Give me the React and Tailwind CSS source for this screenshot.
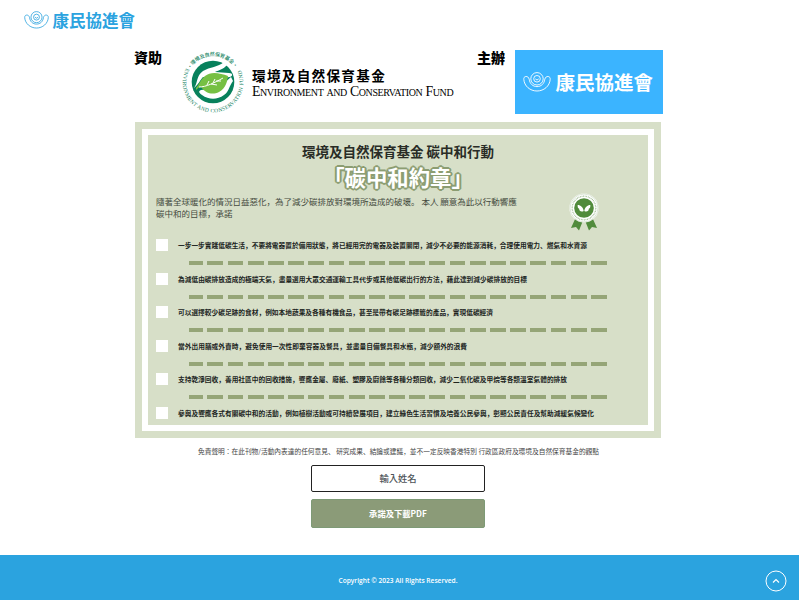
const pledges = [
  { text: '一步一步實踐低碳生活，不要將電器置於備用狀態，將已經用完的電器及裝置關閉，減少不必要的能源消耗，合理使用電力、燃氣和水資源', width: 'w-[409px]' },
  { text: '為減低由碳排放造成的極端天氣，盡量選用大眾交通運輸工具代步或其他低碳出行的方法，藉此達到減少碳排放的目標', width: 'w-[349px]' },
  { text: '可以選擇較少碳足跡的食材，例如本地蔬果及各種有機食品，甚至是帶有碳足跡標籤的產品，實現低碳經濟', width: 'w-[315px]' },
  { text: '當外出用膳或外賣時，避免使用一次性即棄容器及餐具，並盡量自備餐具和水瓶，減少額外的浪費', width: 'w-[289px]' },
  { text: '支持乾淨回收，善用社區中的回收措施，響應金屬、廢紙、塑膠及廚餘等各種分類回收，減少二氧化碳及甲烷等各類溫室氣體的排放', width: 'w-[389px]' },
  { text: '參與及響應各式有關碳中和的活動，例如植樹活動或可持續發展項目，建立綠色生活習慣及培養公民參與，彰顯公民責任及幫助減緩氣候變化', width: 'w-[416px]' },
];

const font = "font-['Noto_Sans_CJK_JP',sans-serif]";

function BrandMark({ className }) {
  return (
    <svg viewBox="0 0 28 20" className={className} fill="none" stroke="currentColor" strokeWidth="0.9">
      <circle cx="14" cy="6.800" r="3.300" />
      <path d="M12.300 6.900q1.700 2.200 3.400 0" />
      <circle cx="14" cy="6.800" r="6.200" />
      <path d="M6.200 7.200C5.600 5.200 4.400 4.300 2.800 4.500 1.300 4.700.7 5.800.8 7.400 1.300 14 7 19 14 19s12.700-5 13.200-11.600c.1-1.600-.5-2.700-2-2.900-1.600-.2-2.800.7-3.400 2.700C21.200 11.800 18.200 14.600 14 14.600S6.800 11.800 6.200 7.200z" />
    </svg>
  );
}

function FundLogo() {
  return (
    <svg viewBox="0 0 66 66" className="h-[66px] w-[66px] shrink-0">
      <defs>
        <path id="fund-top" d="M10.200 20.500A26 26 0 0 1 55.800 20.500" />
        <path id="fund-bottom" d="M6.200 19A30.300 30.300 0 1 0 59.800 19" />
      </defs>
      <circle cx="33" cy="33" r="21.300" fill="#08815c" />
      <path d="M14 39C18 34 16 27 23 22c7-4 15-4 21-9l3 3c-3 4-8 5-12 7l14 1c4 0 4 3 1 4l-8 1-19-1c-3 3-4 7-9 11z" fill="#fff" />
      <path d="M22 46c7 5 15 5 22 0 5-3 5-9 9-14l-2-4c-5 4-8 8-11 11l-11 1-8 1c-3 1-2 3 1 5z" fill="#fff" />
      <path d="M16 39c3-3 4-8 9-12 6-5 15-3 23 0-1 6-2 12-9 16-6 3-13 2-18-5-2 0-3 1-5 3z" fill="#76c043" />
      <path d="M19 38c7 0 15-4 24-9M27 36l2-4M33 34l2-4M31 35l6 1M36 32l5 0" stroke="#fff" strokeWidth="1" fill="none" />
      <text fill="#168463" className="font-['Noto_Sans_CJK_JP',sans-serif] text-[5px] font-medium">
        <textPath href="#fund-top" textLength="54">・環境及自然保育基金・</textPath>
      </text>
      <text fill="#168463" className="font-['Liberation_Serif',serif] text-[5.500px]">
        <textPath href="#fund-bottom" textLength="122">ENVIRONMENT AND CONSERVATION FUND</textPath>
      </text>
    </svg>
  );
}

function Ribbon() {
  return (
    <svg viewBox="0 0 32 40" className="h-10 w-8">
      <path d="M8 26 3 37l5-1 3 3.500 4-10zM24 26l5 11-5-1-3 3.500-4-10z" fill="#518b3c" />
      <circle cx="16" cy="17" r="14.600" fill="#fff" />
      <circle cx="16" cy="17" r="14" fill="none" stroke="#a9c39c" strokeWidth=".4" />
      <circle cx="16" cy="17" r="11.800" fill="none" stroke="#9dba90" strokeWidth="1.300" strokeDasharray=".8 .8" />
      <circle cx="16" cy="17" r="9.800" fill="#518b3c" />
      <path d="M15.700 20c-.5-3.500-3-6-6-6-.3 2 .3 3.200 1.500 3.800-.2 2 2 3.600 4.500 2.200zM16.300 20c.5-3.500 3-6 6-6 .3 2-.3 3.200-1.500 3.800.2 2-2 3.600-4.500 2.200z" fill="#fff" />
    </svg>
  );
}

function Line({ text, className }) {
  return (
    <span className={`block whitespace-nowrap [text-align-last:justify] [text-justify:inter-character] ${className}`}>{text}</span>
  );
}

function Dashes() {
  return (
    <div className="ml-[41px] flex h-1 w-[418px] justify-between">
      {Array.from({ length: 21 }, (_, i) => (
        <span key={i} className={i === 0 ? 'h-1 w-[14px] bg-[#95a577]' : 'h-1 w-[15.800px] bg-[#95a577]'} />
      ))}
    </div>
  );
}

export default function App() {
  return (
    <div lang="ja" className={`flex h-[600px] w-[800px] flex-col overflow-hidden bg-white ${font}`}>
      <header className="flex h-10 items-center gap-[3.500px] pl-6 text-[#2ba3df]">
        <BrandMark className="h-[18px] w-[25px]" />
        <span className="text-[16.500px] leading-5 font-bold">康民協進會</span>
      </header>

      <main className="flex h-[515px] flex-col">
        <div className="flex h-[82px] items-start pl-[134px] pt-[9px]">
          <span className="w-[46px] text-[14px] leading-4 font-black text-black">資助</span>
          <FundLogo />
          <div className="ml-[6px] w-[225px] pt-[17px] text-black">
            <div className="text-[13.600px] leading-[18px] font-bold tracking-[1.300px]">環境及自然保育基金</div>
            <div className="font-['Liberation_Serif',serif] text-[13.800px] leading-[15px] tracking-[-0.390px] whitespace-nowrap [font-variant-caps:small-caps]">
              Environment and Conservation Fund
            </div>
          </div>
          <span className="w-[37.500px] text-[14px] leading-4 font-black text-black">主辦</span>
          <div className="mt-px flex h-[64px] w-[148px] items-center gap-[5px] bg-[#3bb4ff] pl-[8px] text-white">
            <BrandMark className="h-[20px] w-[28px]" />
            <span className="text-[19.500px] leading-6 font-bold">康民協進會</span>
          </div>
        </div>

        <section className="ml-[135px] h-[316px] w-[526px] bg-[#d7dfc8] p-[7px]">
          <div className="h-[302px] border-6 border-white">
            <h1 className="pt-[7px] text-center text-[13.500px] leading-[18px] font-bold text-[#292c26]">環境及自然保育基金 碳中和行動</h1>
            <h2 className="mt-[5px] h-[26px] text-center text-[21.400px] leading-[24px] font-bold text-white [text-shadow:2px_0_0_#8c9d72,-2px_0_0_#8c9d72,0_2px_0_#8c9d72,0_-2px_0_#8c9d72,1.400px_1.400px_0_#8c9d72,-1.400px_1.400px_0_#8c9d72,1.400px_-1.400px_0_#8c9d72,-1.400px_-1.400px_0_#8c9d72]">「碳中和約章」</h2>
            <div className="flex justify-between pl-[8px] pr-[48px]">
              <p className="mt-[4px] w-[370px] text-[8.500px] leading-[12px] whitespace-nowrap text-[#454b3e]">
                隨著全球暖化的情況日益惡化，為了減少碳排放對環境所造成的破壞。 本人 願意為此以行動響應
                <br />
                碳中和的目標，承諾
              </p>
              <div className="h-10"><Ribbon /></div>
            </div>
            <ul className="mt-[7px] flex flex-col">
              {pledges.map((p, i) => (
                <li key={i} className="flex h-[33.500px] flex-col">
                  <div className="flex h-[14px] items-center pl-[8px]">
                    <span className="h-[12px] w-[12px] bg-white" />
                    <Line text={p.text} className={`ml-[10px] text-[6.700px] leading-[12px] font-bold text-[#20241d] ${p.width}`} />
                  </div>
                  {i < pledges.length - 1 && <div className="mt-[9px]"><Dashes /></div>}
                </li>
              ))}
            </ul>
          </div>
        </section>

        <div className="mt-[7px] flex justify-center pr-[3px] text-[6.700px] leading-[12px] text-[#444]">
          <Line className="w-[401px]" text="免責聲明：在此刊物/活動內表達的任何意見、 研究成果、結論或建議，並不一定反映香港特別 行政區政府及環境及自然保育基金的觀點" />
        </div>
        <form className="ml-[311px] mt-[8px] flex w-[174px] flex-col gap-[7px]">
          <div className="flex h-[27px] items-center justify-center rounded-[2px] border border-[#222] text-[9.300px] font-medium text-[#4d5358]">輸入姓名</div>
          <button type="button" className="h-[29px] rounded-[2px] border border-[#7e9a76] bg-[#8b9b78] text-[8.300px] font-bold text-white">承諾及下載PDF</button>
        </form>
      </main>

      <footer className="relative flex h-[45px] w-[799px] items-center justify-center bg-[#2ba3df] pt-[6px] pr-[3px]">
        <span className="font-['Open_Sans',sans-serif] text-[6.600px] leading-3 font-semibold text-white">Copyright © 2023 All Rights Reserved.</span>
        <svg viewBox="0 0 22 22" className="absolute top-[15px] right-[12px] h-[22px] w-[22px]" fill="none" stroke="#fff">
          <circle cx="11" cy="11" r="10" strokeWidth="1" />
          <path d="m8 12.500 3-3 3 3" strokeWidth="1.200" />
        </svg>
      </footer>
    </div>
  );
}
